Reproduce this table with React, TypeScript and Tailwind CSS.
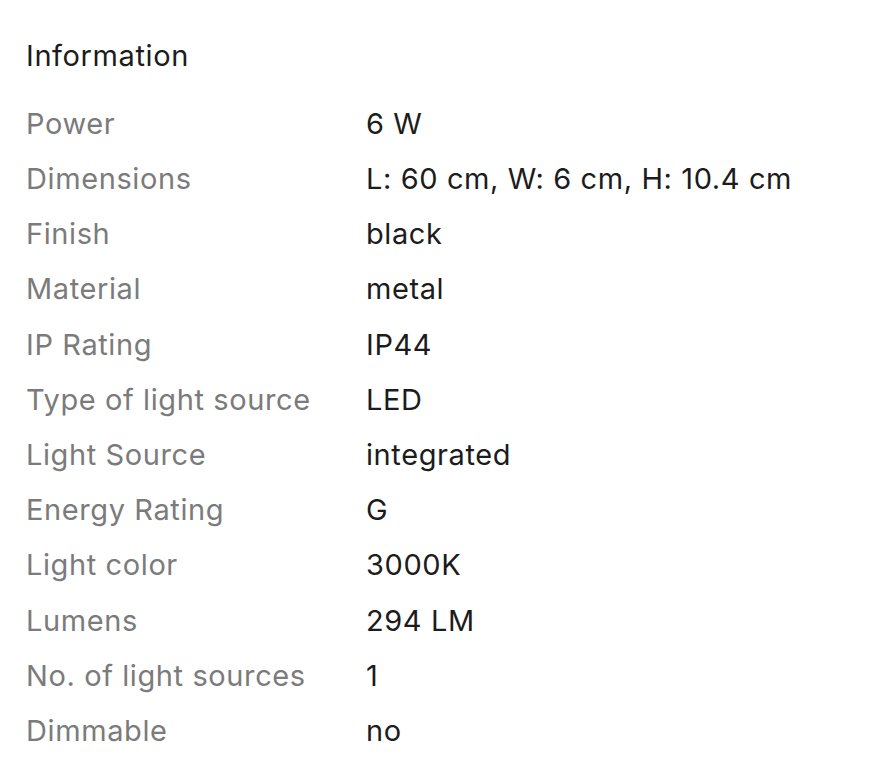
const rows: [string, string][] = [
  ["Power", "6 W"],
  ["Dimensions", "L: 60 cm, W: 6 cm, H: 10.4 cm"],
  ["Finish", "black"],
  ["Material", "metal"],
  ["IP Rating", "IP44"],
  ["Type of light source", "LED"],
  ["Light Source", "integrated"],
  ["Energy Rating", "G"],
  ["Light color", "3000K"],
  ["Lumens", "294 LM"],
  ["No. of light sources", "1"],
  ["Dimmable", "no"],
];

export default function App() {
  return (
    <div className="min-h-[783px] w-[879px] bg-white pl-[26px] pt-[34px]" style={{ fontFamily: "Inter, 'Noto Sans', sans-serif" }}>
      <h2 className="text-[29px] leading-[44px] text-[#1c1c1c] font-normal tracking-[0.6px]">Information</h2>
      <div className="mt-[18px] flex flex-col">
        {rows.map(([k, v]) => (
          <div key={k} className="flex h-[55.2px] items-center text-[29px] tracking-[0.6px]">
            <div className="w-[340px] text-[#7b7b7b]">{k}</div>
            <div className="text-[#1c1c1c]">{v}</div>
          </div>
        ))}
      </div>
    </div>
  );
}
